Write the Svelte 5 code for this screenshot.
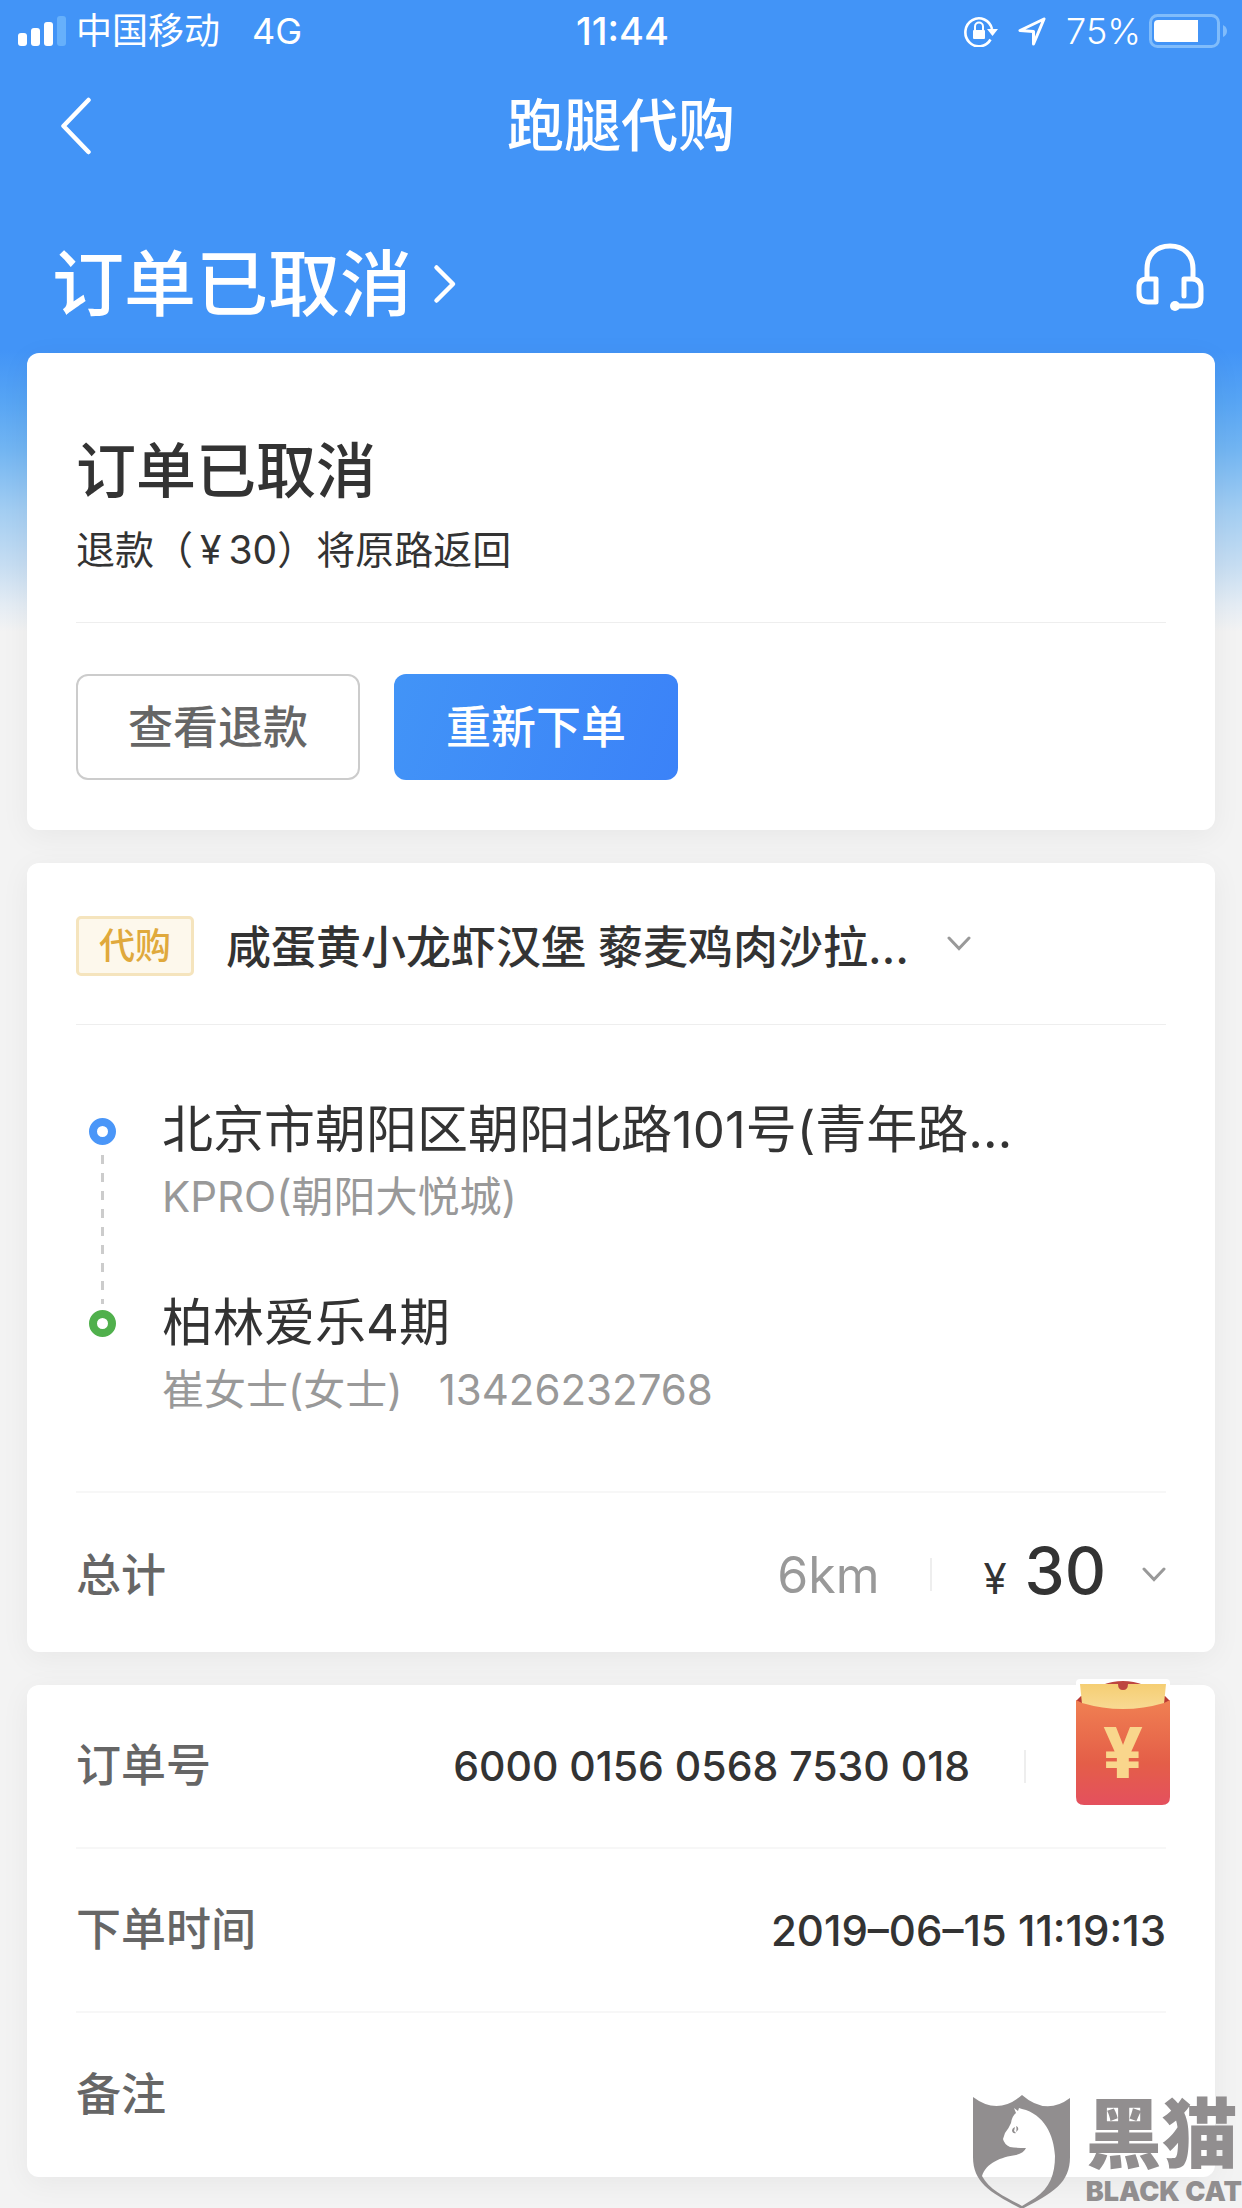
<script lang="ts">
	interface Stop {
		place: string;
		contact: string;
		phone?: string;
	}

	const stops: Stop[] = [
		{ place: '北京市朝阳区朝阳北路101号(青年路…', contact: 'KPRO(朝阳大悦城)' },
		{ place: '柏林爱乐4期', contact: '崔女士(女士)', phone: '13426232768' }
	];

	const signal = [13, 18, 24, 30];
	const battery = 75;
</script>

<div class="page">
	<div class="status-bar">
		<div class="status-left">
			<svg class="signal" width="48" height="30" viewBox="0 0 48 30" aria-hidden="true">
				{#each signal as h, i}
					<rect x={i * 13} y={30 - h} width="9" height={h} rx="3" fill={i < 3 ? '#fff' : '#66b0fb'} />
				{/each}
			</svg>
			<span>中国移动</span>
			<span class="network">4G</span>
		</div>
		<span class="clock">11:44</span>
		<div class="status-right">
			<svg width="34" height="32" viewBox="0 0 34 32" fill="none" aria-hidden="true">
				<path d="M26.500 24.500A13.500 14 0 1 1 28 14" stroke="#fff" stroke-width="2.600" />
				<path d="M23 14h11l-5.500 7z" fill="#fff" />
				<rect x="9" y="15" width="12" height="9" rx="1" fill="#fff" />
				<path d="M11 15v-3.500a4 4 0 0 1 8 0V15" stroke="#fff" stroke-width="2" />
			</svg>
			<svg class="location" width="28" height="29" viewBox="0 0 28 29" fill="none" aria-hidden="true">
				<path d="M26 2L2 13.500l13.500 1L15.500 27z" stroke="#fff" stroke-width="3" stroke-linejoin="round" />
			</svg>
			<span>{battery}%</span>
			<svg class="battery" width="78" height="34" viewBox="0 0 78 34" fill="none" aria-hidden="true">
				<rect x="1.500" y="1.500" width="68" height="31" rx="7" stroke="#80bcfb" stroke-width="3" />
				<path d="M74 11q4 2 4 6t-4 6z" fill="#80bcfb" />
				<path d="M9 6h40v22H9q-4 0-4-4V10q0-4 4-4z" fill="#fff" />
			</svg>
		</div>
	</div>

	<header class="nav-bar">
		<button type="button" class="back" aria-label="返回">
			<svg width="32" height="58" viewBox="0 0 32 58" fill="none">
				<path d="M28.500 3L3.500 29l25 26" stroke="#fff" stroke-width="4.500" stroke-linecap="round" stroke-linejoin="round" />
			</svg>
		</button>
		<h1>跑腿代购</h1>
	</header>

	<div class="hero">
		<button type="button" class="hero-status">
			订单已取消
			<svg width="24" height="40" viewBox="0 0 24 40" fill="none" aria-hidden="true">
				<path d="M3.500 3.500l16.500 16.500-16.500 16.500" stroke="#fff" stroke-width="4.500" stroke-linecap="round" stroke-linejoin="round" />
			</svg>
		</button>
		<button type="button" class="service" aria-label="客服">
			<svg width="68" height="68" viewBox="0 0 68 68" fill="none" stroke="#fff" stroke-width="5">
				<path d="M11 35V26C11 12 20 3 34 3s23 9 23 23v9" />
				<path d="M20 36v23h-8q-9 0-9-9v-6q0-8 8-8z" stroke-linejoin="round" />
				<path d="M48 53V36h8q9 0 9 10v9q0 8-8 8H39" stroke-linecap="round" stroke-linejoin="round" />
				<circle cx="39" cy="63" r="5" fill="#fff" stroke="none" />
			</svg>
		</button>
	</div>

	<main>
		<section class="card">
			<div class="result">
				<h2>订单已取消</h2>
				<p>退款（<span class="yen">¥</span>30）将原路返回</p>
			</div>
			<div class="actions">
				<button type="button" class="btn">查看退款</button>
				<button type="button" class="btn primary">重新下单</button>
			</div>
		</section>

		<section class="card">
			<div class="goods">
				<span class="tag">代购</span>
				<h3>咸蛋黄小龙虾汉堡 藜麦鸡肉沙拉…</h3>
				<button type="button" class="expand" aria-label="展开商品">
					{@render chevron()}
				</button>
			</div>
			<div class="route">
				<div class="rail">
					<i class="dot"></i>
					<i class="dash"></i>
					<i class="dot end"></i>
				</div>
				<ul class="stops">
					{#each stops as stop}
						<li>
							<p class="place">{stop.place}</p>
							<p class="contact">
								<span>{stop.contact}</span>
								{#if stop.phone}<span>{stop.phone}</span>{/if}
							</p>
						</li>
					{/each}
				</ul>
			</div>
			<div class="total">
				<span class="label">总计</span>
				<span class="distance">6km</span>
				<i class="sep"></i>
				<span class="price"><small>¥</small>30</span>
				<button type="button" class="expand" aria-label="展开费用">
					{@render chevron()}
				</button>
			</div>
		</section>

		<section class="card">
			<dl>
				<div class="row number">
					<dt>订单号</dt>
					<dd>6000 0156 0568 7530 018</dd>
					<i class="sep"></i>
				</div>
				<div class="row">
					<dt>下单时间</dt>
					<dd>2019–06–15 11:19:13</dd>
				</div>
				<div class="row">
					<dt>备注</dt>
					<dd></dd>
				</div>
			</dl>
			<button type="button" class="packet" aria-label="红包">
				<svg width="94" height="126" viewBox="0 0 94 126">
					<defs>
						<linearGradient id="packet-body" x1="0" y1="0" x2="0" y2="1">
							<stop offset="0" stop-color="#f08052" />
							<stop offset="0.6" stop-color="#e45e48" />
							<stop offset="1" stop-color="#e4505e" />
						</linearGradient>
						<linearGradient id="packet-card" x1="0" y1="0" x2="0" y2="1">
							<stop offset="0" stop-color="#f5ce73" />
							<stop offset="1" stop-color="#f9dc99" />
						</linearGradient>
					</defs>
					<path d="M4 0h86q4 0 4 4v20H0V4q0-4 4-4z" fill="#fff" />
					<path d="M0 22l5-5h84l5 5v10H0z" fill="#b93a35" />
					<path d="M26 6q21-8 42 0z" fill="#bd4640" />
					<path d="M4 5h86l-2 20v10H6V25z" fill="url(#packet-card)" />
					<path d="M42 5h10q0 6-5 6t-5-6z" fill="#bd4640" />
					<path d="M0 21l6 3q41 12 82 0l6-3v97q0 8-8 8H8q-8 0-8-8z" fill="url(#packet-body)" />
					<text x="47" y="99" text-anchor="middle" class="packet-yen">¥</text>
				</svg>
			</button>
		</section>
	</main>

	<div class="watermark">
		<svg width="98" height="114" viewBox="0 0 98 114" aria-hidden="true">
			<path
				fill="#918e8f"
				fill-rule="evenodd"
				d="M0 2Q25 21 49 0Q73 21 97 3V62C97 88 80 98 49 114C18 98 0 88 0 62Z
				M41 13L43 18Q39 21 38 28Q36 33 32 38L30 44Q31 49 37 52Q43 53 53 53Q51 58 43 60C28 62 13 68 9 81C17 96 33 102 49 111L62 103C77 93 82 79 82 61C81 40 71 19 49 14L46 13L45 16Z"
			/>
			<path d="M39 36q0-3 3-4l-1 4 2 2q-3 1-4-2zM43 31q3 1 2 4l-2 2q1-3 0-6z" fill="#918e8f" />
		</svg>
		<div class="wordmark">
			<span class="cn">黑猫</span>
			<span class="en">BLACK CAT</span>
		</div>
	</div>
</div>

{#snippet chevron()}
	<svg width="24" height="16" viewBox="0 0 24 16" fill="none" aria-hidden="true">
		<path d="M2 2l10 10.500L22 2" stroke="#999" stroke-width="3" stroke-linecap="round" />
	</svg>
{/snippet}

<style>
	:global(body) {
		background: #f3f3f3;
	}

	.page {
		position: relative;
		min-height: 100vh;
		box-sizing: border-box;
		padding-bottom: 32px;
		overflow: hidden;
		background: linear-gradient(
			#4294f7 350px,
			#56a4f4 400px,
			#72b5f2 450px,
			#a2cdf2 510px,
			#c6ddf2 565px,
			#e4ecf4 605px,
			#f3f3f3 632px
		);
		color: #333;
		font-family: Inter, 'Noto Sans CJK SC', sans-serif;
	}

	h1,
	h2,
	h3,
	p,
	ul,
	dl,
	dd {
		margin: 0;
		padding: 0;
	}

	button {
		padding: 0;
		border: none;
		background: none;
		color: inherit;
		font: inherit;
		cursor: pointer;
	}

	svg {
		display: block;
	}

	.status-bar {
		display: grid;
		grid-template-columns: 1fr auto 1fr;
		align-items: center;
		height: 62px;
		padding: 0 15px 0 18px;
		color: #fff;
		font-size: 36px;
		line-height: 40px;
	}

	.status-left,
	.status-right {
		display: flex;
		align-items: center;
	}

	.signal {
		margin-right: 10px;
	}

	.network {
		margin-left: 32px;
	}

	.clock {
		font-size: 38px;
		font-weight: 500;
	}

	.status-right {
		justify-content: flex-end;
		font-weight: 300;
	}

	.location {
		margin: 0 20px;
	}

	.battery {
		margin-left: 8px;
	}

	.nav-bar {
		display: grid;
		grid-template-columns: 1fr auto 1fr;
		align-items: center;
		height: 128px;
		padding: 0 60px;
		color: #fff;
	}

	.back {
		justify-self: start;
	}

	h1 {
		font-size: 57px;
		font-weight: 500;
		line-height: 72px;
	}

	.hero {
		display: flex;
		justify-content: space-between;
		align-items: center;
		height: 139px;
		padding: 24px 38px 0 52px;
		color: #fff;
	}

	.hero-status {
		display: flex;
		align-items: center;
		gap: 21px;
		font-size: 72px;
		font-weight: 500;
		line-height: 96px;
	}

	.service {
		margin-bottom: 14px;
	}

	main {
		display: flex;
		flex-direction: column;
		gap: 33px;
		padding: 0 27px;
	}

	.card {
		position: relative;
		padding: 0 49px;
		border-radius: 12px;
		background: #fff;
		box-shadow: 0 6px 30px rgba(0, 0, 0, 0.05);
	}

	.result {
		padding: 76px 0 45px;
		border-bottom: 1px solid #eee;
	}

	h2 {
		font-size: 60px;
		font-weight: 500;
		line-height: 84px;
	}

	.result p {
		margin-top: 10px;
		font-size: 39px;
		line-height: 54px;
	}

	.yen {
		padding: 0 7px;
	}

	.actions {
		display: flex;
		gap: 34px;
		padding: 51px 0 50px;
	}

	.btn {
		box-sizing: border-box;
		height: 106px;
		padding: 0 50px 6px;
		border: 2px solid #ccc;
		border-radius: 12px;
		color: #666;
		font-size: 45px;
		font-weight: 500;
	}

	.btn.primary {
		border: none;
		padding: 0 52px 6px;
		background: linear-gradient(110deg, #4294f7, #3b82f8);
		color: #fff;
	}

	.goods {
		display: flex;
		align-items: center;
		height: 161px;
		border-bottom: 1px solid #eee;
	}

	.tag {
		box-sizing: border-box;
		height: 60px;
		margin-top: 4px;
		padding: 0 20px;
		border: 3px solid #f5e4bd;
		border-radius: 5px;
		background: #fdf8ec;
		color: #e0a93c;
		font-size: 36px;
		font-weight: 500;
		line-height: 54px;
	}

	h3 {
		margin: 8px 38px 0 32px;
		font-size: 45px;
		font-weight: 500;
		line-height: 60px;
	}

	.route {
		display: flex;
		gap: 46px;
		padding: 69px 0 74px 13px;
		border-bottom: 2px solid #f7f7f7;
	}

	.rail {
		display: flex;
		flex-direction: column;
		align-items: center;
		padding: 24px 0 80px;
	}

	.dot {
		box-sizing: border-box;
		width: 27px;
		height: 27px;
		border: 8px solid #4a96f8;
		border-radius: 50%;
	}

	.dot.end {
		border-color: #50b04c;
	}

	.dash {
		flex: 1;
		width: 3px;
		margin: 10px 0 6px;
		background: repeating-linear-gradient(#ccc 0 9px, transparent 9px 18px);
	}

	.stops {
		display: flex;
		flex-direction: column;
		gap: 63px;
		list-style: none;
	}

	.place {
		font-size: 51px;
		line-height: 72px;
	}

	.contact {
		display: flex;
		gap: 36px;
		margin-top: 4px;
		color: #999;
		font-size: 42px;
		line-height: 54px;
	}

	.total {
		display: flex;
		align-items: center;
		box-sizing: border-box;
		height: 159px;
		padding-top: 4px;
	}

	.label {
		flex: 1;
		padding-bottom: 4px;
		color: #666;
		font-size: 45px;
		font-weight: 500;
	}

	.distance {
		color: #999;
		font-size: 50px;
	}

	.sep {
		width: 2px;
		height: 33px;
		background: #eee;
	}

	.total .sep {
		margin: 0 51px;
	}

	.price {
		margin-right: 36px;
		font-size: 64px;
		font-weight: 500;
		line-height: 80px;
	}

	.price small {
		margin-right: 18px;
		font-size: 42px;
		font-weight: 400;
	}

	.row {
		display: flex;
		align-items: center;
		justify-content: space-between;
		box-sizing: border-box;
		height: 164px;
		border-bottom: 2px solid #f7f7f7;
	}

	.row:last-child {
		border-bottom: none;
	}

	.row.number {
		gap: 54px;
		padding-right: 140px;
	}

	dt {
		flex: 1;
		padding-bottom: 8px;
		color: #666;
		font-size: 45px;
		font-weight: 500;
	}

	dd {
		font-size: 42px;
		font-weight: 500;
	}

	.number dd {
		font-size: 41px;
	}

	.packet {
		position: absolute;
		top: -6px;
		right: 45px;
	}

	.packet-yen {
		fill: #f9d68c;
		font-size: 70px;
		font-weight: 800;
	}

	.watermark {
		position: absolute;
		right: 0;
		bottom: 0;
		display: flex;
		align-items: flex-end;
		gap: 15px;
		color: #918e8f;
	}

	.wordmark {
		display: flex;
		flex-direction: column;
		align-items: flex-start;
	}

	.cn {
		font-size: 76px;
		font-weight: 900;
		line-height: 82px;
	}

	.en {
		font-size: 27px;
		font-weight: 900;
		line-height: 34px;
	}
</style>
